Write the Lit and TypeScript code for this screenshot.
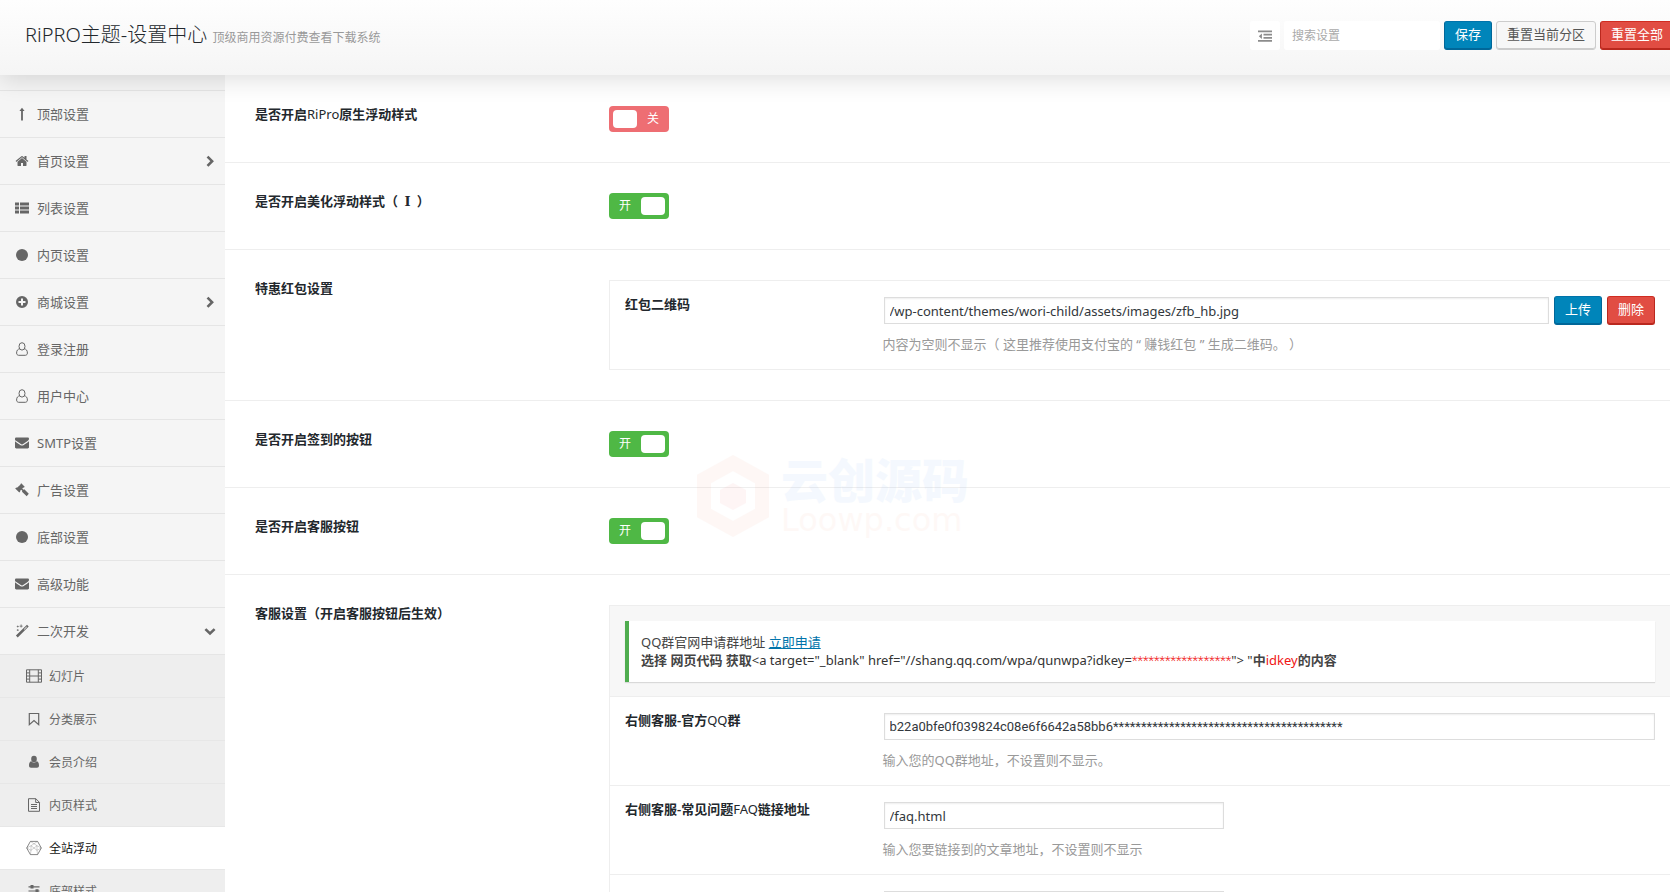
import { LitElement, html, css, svg, nothing, TemplateResult } from "lit";
import { customElement, property, state } from "lit/decorators.js";
import { classMap } from "lit/directives/class-map.js";

type Glyph = TemplateResult | ReturnType<typeof svg>;

const user = "M4.6 6.9C2.9 7 1.6 8.400 1.6 11c0 1.300.8 2.300 2 2.300h6.800c1.200 0 2-1 2-2.300 0-2.600-1.300-4-3-4.100";

const glyphs: Record<string, Glyph> = {
  arrow: svg`<path d="M7 .8 9.600 4H7.900v9.400H6.100V4H4.400z"/>`,
  home: svg`<path transform="scale(.0078125)" d="M1472 992v480q0 26-19 45t-45 19h-384v-384h-256v384h-384q-26 0-45-19t-19-45v-480q0-1 .5-3t.5-3l575-474 575 474q1 2 1 6zm223-69l-62 74q-8 9-21 11h-3q-13 0-21-7l-692-577-692 577q-12 8-24 7-13-2-21-11l-62-74q-8-10-7-23.500t11-21.500l719-599q32-26 76-26t76 26l244 204v-195q0-14 9-23t23-9h192q14 0 23 9t9 23v408l219 182q10 8 11 21.500t-7 23.500z"/>`,
  list: svg`<path d="M0 1.500h4v3H0zM5 1.500h9v3H5zM0 5.500h4v3H0zM5 5.500h9v3H5zM0 9.500h4v3H0zM5 9.500h9v3H5z"/>`,
  circle: svg`<circle cx="7" cy="7" r="6"/>`,
  plus: svg`<path fill-rule="evenodd" d="M7 1a6 6 0 1 0 0 12A6 6 0 0 0 7 1zM6 3.500h2V6h2.500v2H8v2.500H6V8H3.500V6H6z"/>`,
  userO: svg`<path fill="none" stroke="currentColor" d="${user}"/><ellipse cx="7" cy="4.400" rx="3" ry="3.700" fill="none" stroke="currentColor"/>`,
  mail: svg`<path d="M0 3.400V2.800C0 2 .6 1.500 1.300 1.500h11.400c.7 0 1.300.5 1.300 1.300 0 .9-.7 1.700-1.400 2.200L8.500 7.800C8 8.200 7.500 8.500 7 8.500s-1-.3-1.500-.7L1.400 5C.8 4.600 0 4 0 3.400z"/><path d="M0 5.200c1.400 1.200 3 2.100 4.600 3.300.7.500 1.500 1.100 2.400 1.100s1.700-.6 2.400-1.100C11 7.300 12.600 6.400 14 5.200v6.100c0 .7-.6 1.200-1.300 1.200H1.300c-.7 0-1.300-.5-1.300-1.200z"/>`,
  gavel: svg`<path d="M6.300.3 9.700 3.700 8.800 4.800 8.200 4.600 7.300 5.600 8.400 6.700 9.300 6.200 13.800 10.800 11.700 13.200 7 8.700 7.300 7.800 6.200 6.700 5 7.900 5.300 8.600 4.300 9.600.2 5.500 1.300 4.500 2 4.800 5.600 1.500 5.300 1.200z"/>`,
  magic: svg`<path fill-rule="evenodd" d="M12 .8 13.700 2.500 2.700 13.400.9 11.600zM11.500 2.600 8.800 5.300 9.300 5.800 12 3.100z"/><path d="M2.500 1.600h.6v.7h.7v.6h-.7v.7h-.6v-.7h-.7v-.6h.7zM5.700.6h.8v1.100h1.100v.8H6.500v1.100h-.8V2.500H4.600v-.8h1.100zM2.500 5.100h.6v.7h.7v.6h-.7v.7h-.6v-.7h-.7v-.6h.7z"/>`,
  film: svg`<path fill="none" stroke="currentColor" d="M-.5.8h15v12.400h-15zM2.700.8v12.400M11.300.8v12.400M2.700 7h8.600M-.5 3.900h3.200M-.5 7h3.200M-.5 10.100h3.200M11.300 3.900h3.200M11.300 7h3.200M11.300 10.100h3.200"/>`,
  bookmark: svg`<path fill="none" stroke="currentColor" stroke-width="1.200" d="M2.300 1.500h9.400v11.200L7 8.600l-4.700 4.100z"/>`,
  user: svg`<ellipse cx="7" cy="4" rx="2.800" ry="3.200"/><path d="M4.300 6.200C2.700 6.600 2 8 2 10.600c0 1.400.8 2.200 2 2.200h6c1.200 0 2-.8 2-2.200 0-2.600-.7-4-2.300-4.400C8.300 8 5.700 8 4.300 6.200z"/>`,
  file: svg`<path fill="none" stroke="currentColor" d="M1.500.7h7.300l3.700 3.700v8.900h-11zM8.700.7v3.800h3.800M4 6.500h6M4 8.500h6M4 10.500h6"/>`,
  hex: svg`<path fill="none" stroke="currentColor" stroke-width=".8" d="M3.400.4h7.200L14.300 7l-3.700 6.600H3.400L-.3 7z"/><path fill="none" stroke="currentColor" stroke-width=".3" d="M3.400.4 10 4.700M10.600.4 4 4.700M-.3 7 4 4.700 10 9.300 14.300 7 10 4.700 4 9.300zM3.400 13.600 4 9.300M10.600 13.600 10 9.300M4 4.700v4.600M10 4.700v4.600"/>`,
  sliders: svg`<path d="M1.500 2.200h11v1.200h-11zM1.500 6.400h11v1.200h-11zM1.500 10.600h11v1.200h-11zM3.500 1.100h3v3.300h-3zM8.500 5.300h3v3.300h-3zM4 9.500h3v3.300H4z"/>`,
  outdent: svg`<path d="M0 1.500h14v1.800H0zM5.500 4.700H14v1.800H5.500zM5.500 7.900H14v1.800H5.500zM0 11h14v1.800H0zM3.900 4.400v5.500L.8 7.200z"/>`,
  right: svg`<path fill="none" stroke="currentColor" stroke-width="2.600" d="m4.500 2.600 4.600 4.600-4.600 4.600"/>`,
  down: svg`<path fill="none" stroke="currentColor" stroke-width="2.600" d="M2.400 5.100 7 9.500l4.600-4.400"/>`,
};

const FONT = css`"Noto Sans", "Open Sans", "Noto Sans CJK SC", sans-serif`;

@customElement("ui-icon")
export class UiIcon extends LitElement {
  static styles = css`
    :host { display: block; width: 14px; height: 14px; flex: none; }
    .glyph { display: block; width: 100%; height: 100%; fill: currentColor; overflow: visible; }
  `;
  @property() name = "circle";
  render() {
    return html`<svg class="glyph" viewBox="0 0 14 14" aria-hidden="true">${glyphs[this.name] ?? nothing}</svg>`;
  }
}

@customElement("ui-switch")
export class UiSwitch extends LitElement {
  static styles = css`
    :host { display: block; font: 12px/18px ${FONT}; }
    .switch {
      position: relative; display: flex; align-items: center;
      box-sizing: border-box; width: 60px; height: 26px; padding: 4px;
      border-radius: 4px; background: #ee6e73; color: #fff; cursor: pointer;
    }
    .switch.on { background: #4fb845; flex-direction: row-reverse; }
    .box { position: absolute; inset: 0; margin: 0; opacity: 0; cursor: pointer; }
    .word { flex: 1; text-align: center; padding-left: 4px; }
    .on .word { padding: 0 4px 0 0; }
    .knob { order: -1; width: 24px; height: 18px; border-radius: 4px; background: #fff; }
  `;
  @property() label = "";
  @property({ type: Boolean }) checked = false;
  render() {
    return html`<label class=${classMap({ switch: true, on: this.checked })}>
      <input class="box" type="checkbox" aria-label=${this.label} .checked=${this.checked}
        @change=${(e: Event) => { this.checked = (e.target as HTMLInputElement).checked; }}>
      <span class="word">${this.checked ? "开" : "关"}</span><span class="knob"></span>
    </label>`;
  }
}

interface NavItem { text: string; icon: string; children?: NavItem[]; }

const NAV: NavItem[] = [
  { text: "顶部设置", icon: "arrow" },
  { text: "首页设置", icon: "home", children: [] },
  { text: "列表设置", icon: "list" },
  { text: "内页设置", icon: "circle" },
  { text: "商城设置", icon: "plus", children: [] },
  { text: "登录注册", icon: "userO" },
  { text: "用户中心", icon: "userO" },
  { text: "SMTP设置", icon: "mail" },
  { text: "广告设置", icon: "gavel" },
  { text: "底部设置", icon: "circle" },
  { text: "高级功能", icon: "mail" },
  {
    text: "二次开发", icon: "magic", children: [
      { text: "幻灯片", icon: "film" },
      { text: "分类展示", icon: "bookmark" },
      { text: "会员介绍", icon: "user" },
      { text: "内页样式", icon: "file" },
      { text: "全站浮动", icon: "hex" },
      { text: "底部样式", icon: "sliders" },
    ],
  },
];

/* Latin runs in a heading are set lighter than the Chinese around them. */
const mixed = (text: string) =>
  text.split(/([A-Za-z]+|Ⅰ)/).map((part) =>
    part === "Ⅰ" ? html`<span class="roman">${part}</span>`
      : /^[A-Za-z]+$/.test(part) ? html`<span class="latin">${part}</span>` : part);

@customElement("app-root")
export class AppRoot extends LitElement {
  static styles = css`
    :host { display: block; height: 100vh; overflow: hidden; background: #fff; color: #444; font: 13px/19px ${FONT}; }
    .page { display: flex; flex-direction: column; width: calc(100% + 31px); height: 100%; }
    .header {
      position: relative; z-index: 2; box-sizing: border-box; height: 75px; flex: none; padding: 21px 27px 0 25px;
      display: flex; align-items: flex-start; justify-content: space-between;
      background: linear-gradient(#fefefe, #f5f5f5); box-shadow: 0 5px 25px rgba(0, 0, 0, .13);
    }
    .brand { margin: 0; font-size: 20px; line-height: 28px; font-weight: 300; color: #23282d; white-space: nowrap; }
    .brand small { font-size: 12px; font-weight: 400; color: #999; }
    .tools { display: flex; gap: 4px; }
    .expand { display: grid; place-items: center; width: 30px; height: 29px; padding: 0; border: 0; border-radius: 3px; background: #fff; color: #8c8c8c; }
    .search { box-sizing: border-box; width: 156px; height: 29px; padding: 0 8px; border: 0; border-radius: 3px; background: #fff; font: 12px/29px ${FONT}; color: #444; outline: 0; }
    .search::placeholder { color: #aaa; opacity: 1; }
    .btn { box-sizing: border-box; height: 29px; padding: 0 10px 2px; border: 1px solid; border-radius: 3px; font: 13px/19px ${FONT}; white-space: nowrap; cursor: pointer; }
    .primary { background: #0085ba; border-color: #0073aa #006799 #006799; box-shadow: inset 0 -1px 0 #006799; color: #fff; }
    .plain { background: #f7f7f7; border-color: #ccc; box-shadow: inset 0 -1px 0 #ccc; color: #555; }
    .danger { background: #e14d43; border-color: #d02c21 #ba281e #ba281e; box-shadow: inset 0 -1px 0 #ba281e; color: #fff; }
    .body { display: flex; flex: 1; min-height: 0; }
    .side { width: 225px; flex: none; background: #f5f5f5; overflow: hidden; }
    .menu, .sub { margin: 0; padding: 0; list-style: none; }
    .menu { margin-top: 15px; border-top: 1px solid #e5e5e5; }
    .item { display: flex; align-items: center; gap: 8px; box-sizing: border-box; height: 47px; padding: 0 8px 0 15px; border-bottom: 1px solid #e5e5e5; color: #666; text-decoration: none; }
    .item .text { flex: 1; }
    .sub { background: #eee; }
    .sub .item { height: 43px; padding-left: 27px; font-size: 12px; border-color: #e7e7e7; }
    .sub .active { background: #fff; color: #111; }
    .sub .active ui-icon { color: #666; }
    .main { position: relative; flex: 1; min-width: 0; padding-top: 1px; overflow: hidden; }
    .row { display: grid; grid-template-columns: 25% minmax(0, 1fr); padding: 30px; border-bottom: 1px solid #eee; }
    .name { margin: 0; font-size: 13px; line-height: 17px; font-weight: 600; color: #23282d; }
    .latin { font-weight: 400; }
    .roman { padding: 0 3px; font-family: "DejaVu Serif", serif; }
    .box { border: 1px solid #eee; }
    .box .row { padding: 15px; }
    .box .row:last-child { border-bottom: 0; }
    .line { display: flex; align-items: center; gap: 5px; height: 29px; }
    .field { box-sizing: border-box; width: 340px; height: 27px; padding: 0 5px; margin-left: 1px; border: 1px solid #ddd; box-shadow: inset 0 1px 2px rgba(0, 0, 0, .07); background: #fff; color: #32373c; font: 13px/19px ${FONT}; outline: 0; }
    .field.wide { flex: 1; width: auto; min-width: 0; }
    .field.key { font-family: Roboto, sans-serif; }
    .hint { margin: 10px 0 0; color: #999; }
    .notice-row { padding: 15px 15px 14px; background: #f7f7f7; border-bottom: 1px solid #eee; }
    .notice { padding: 12px; border-left: 4px solid #4fad4f; background: #fff; box-shadow: 0 1px 1px rgba(0, 0, 0, .12); line-height: 18px; }
    .notice a { color: #0073aa; }
    .notice b { font-weight: 600; }
    .notice .latin { color: #333; }
    .notice .red { color: #f01414; }
    .stars { font-family: Roboto, sans-serif; font-weight: 300; }
    .mark { position: absolute; left: 470px; top: 380px; display: flex; align-items: center; gap: 10px; pointer-events: none; opacity: .05; }
    .mark .logo { width: 76px; height: 82px; }
    .mark .words { display: grid; font-weight: 900; }
    .mark .cn { font-size: 47px; line-height: 48px; color: #3c8cf0; }
    .mark .en { font: 400 32px/32px "DejaVu Sans", sans-serif; color: #f08c64; }
  `;

  @state() private active = "全站浮动";

  private link(item: NavItem, open = false): TemplateResult {
    return html`<a href="#" class=${classMap({ item: true, active: item.text === this.active })}
      @click=${(e: Event) => { e.preventDefault(); if (!item.children) this.active = item.text; }}>
      <ui-icon name=${item.icon}></ui-icon><span class="text">${item.text}</span>
      ${item.children ? html`<ui-icon name=${open ? "down" : "right"}></ui-icon>` : nothing}
    </a>`;
  }

  private toggle(label: string, on: boolean) {
    return html`<section class="row"><h4 class="name">${mixed(label)}</h4><ui-switch label=${label} ?checked=${on}></ui-switch></section>`;
  }

  private field(id: string, label: string, value: string, hint: string, wide: boolean, extra: unknown = nothing) {
    return html`<div class="row">
      <label class="name" for=${id}>${mixed(label)}</label>
      <div>
        <div class="line"><input id=${id} type="text" class=${classMap({ field: true, wide, key: id === "qq" })} .value=${value}>${extra}</div>
        <p class="hint">${hint}</p>
      </div>
    </div>`;
  }

  render() {
    return html`<div class="page">
      <header class="header">
        <h1 class="brand">RiPRO主题-设置中心 <small>顶级商用资源付费查看下载系统</small></h1>
        <div class="tools">
          <button class="expand" aria-label="展开"><ui-icon name="outdent"></ui-icon></button>
          <input class="search" type="text" placeholder="搜索设置" aria-label="搜索设置">
          <button class="btn primary">保存</button>
          <button class="btn plain">重置当前分区</button>
          <button class="btn danger">重置全部</button>
        </div>
      </header>
      <div class="body">
        <nav class="side">
          <ul class="menu">
            ${NAV.map((n) => html`<li>${this.link(n, !!n.children?.length)}
              ${n.children?.length ? html`<ul class="sub">${n.children.map((c) => html`<li>${this.link(c)}</li>`)}</ul>` : nothing}</li>`)}
          </ul>
        </nav>
        <main class="main">
          ${this.toggle("是否开启RiPro原生浮动样式", false)}
          ${this.toggle("是否开启美化浮动样式（ Ⅰ ）", true)}
          <section class="row">
            <h4 class="name">特惠红包设置</h4>
            <div class="box">
              ${this.field("qr", "红包二维码", "/wp-content/themes/wori-child/assets/images/zfb_hb.jpg",
                "内容为空则不显示（ 这里推荐使用支付宝的 “ 赚钱红包 ” 生成二维码。 ）", true,
                html`<button class="btn primary">上传</button><button class="btn danger">删除</button>`)}
            </div>
          </section>
          ${this.toggle("是否开启签到的按钮", true)}
          ${this.toggle("是否开启客服按钮", true)}
          <section class="row">
            <h4 class="name">客服设置（开启客服按钮后生效）</h4>
            <div class="box">
              <div class="notice-row"><div class="notice">
                QQ群官网申请群地址 <a href="#">立即申请</a><br>
                <b>选择 网页代码 获取<span class="latin">&lt;a target="_blank" href="//shang.qq.com/wpa/qunwpa?idkey=<span class="red stars">******************</span>"&gt; "</span>中<span class="latin red">idkey</span>的内容</b>
              </div></div>
              ${this.field("qq", "右侧客服-官方QQ群", "b22a0bfe0f039824c08e6f6642a58bb6*****************************************", "输入您的QQ群地址，不设置则不显示。", true)}
              ${this.field("faq", "右侧客服-常见问题FAQ链接地址", "/faq.html", "输入您要链接到的文章地址，不设置则不显示", false)}
              ${this.field("tel", "", "", "", false)}
            </div>
          </section>
          <div class="mark" aria-hidden="true">
            <svg class="logo" viewBox="0 0 76 82"><path fill="none" stroke="#f07850" stroke-width="14" d="M38 8 67 24v34L38 74 9 58V24z"/><path fill="#f0505a" d="m38 28 13 7v13l-13 7-13-7V35z"/></svg>
            <div class="words"><span class="cn">云创源码</span><span class="en">Loowp.com</span></div>
          </div>
        </main>
      </div>
    </div>`;
  }
}
